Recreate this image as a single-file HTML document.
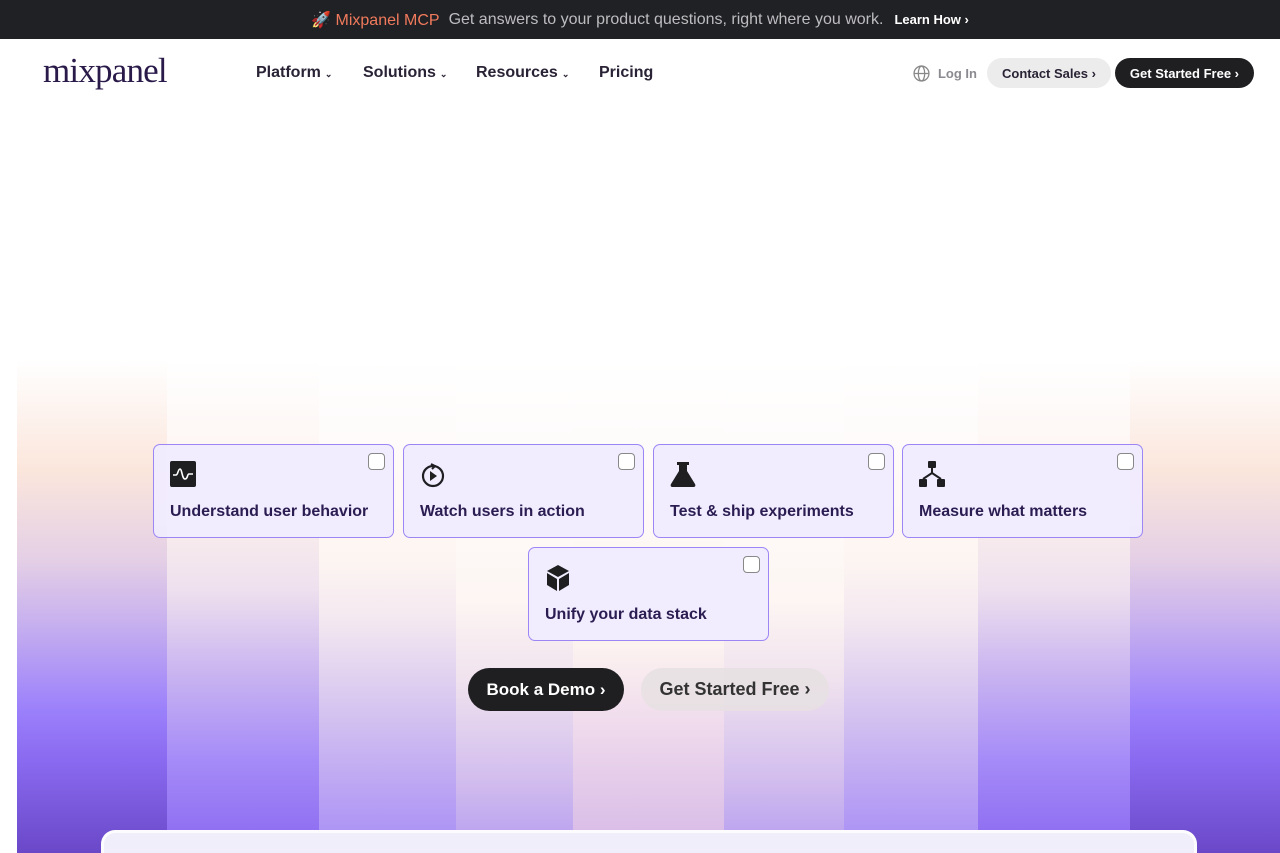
<!DOCTYPE html>
<html><head><meta charset="utf-8"><style>
*{box-sizing:border-box;margin:0;padding:0}
html,body{width:1280px;height:853px;overflow:hidden}
body{background:#fff;font-family:"Liberation Sans",sans-serif;position:relative}
.top{height:39px;background:#202124;color:#bdbdc0;font-size:16px;display:flex;align-items:center;justify-content:center;gap:9px}
.top .r{color:#f07a5c}
.top b{color:#fff;font-size:13px;margin-left:2px}
.nav{position:absolute;top:39px;left:0;right:0;height:68px}
.logo{position:absolute;left:43px;top:12px;font-family:"Liberation Serif",serif;font-size:35px;color:#2a1a4a;letter-spacing:-0.8px}
.links{position:absolute;left:256px;top:25px;font-size:16px;font-weight:bold;color:#2a2335}
.links span{position:absolute;white-space:nowrap}
.links span small{font-size:9px;margin-left:4px}
.right{position:absolute;right:26px;top:19px;display:flex;align-items:center;gap:4px;font-size:13px;font-weight:bold}
.login{color:#8a8a90;display:flex;align-items:center;gap:8px;margin-right:6px}
.pill{height:30px;border-radius:15px;padding:0 15px;display:flex;align-items:center;white-space:nowrap}
.cs{background:#ececec;color:#2a2335}
.gs{background:#1f1f22;color:#fff}
.bg{position:absolute;top:360px;height:493px}
.card{position:absolute;width:241px;height:94px;border:1px solid #9c86f6;border-radius:7px;background:rgba(240,236,255,.93)}
.card .cb{position:absolute;right:8px;top:8px;width:17px;height:17px;border:1.5px solid #888;border-radius:4px;background:#fff}
.card svg{position:absolute;left:16px;top:16px}
.card .t{position:absolute;left:16px;top:58px;font-size:16px;font-weight:bold;color:#2b1d52;white-space:nowrap}
.btn{position:absolute;top:668px;height:43px;border-radius:22px;font-size:18px;font-weight:bold;display:flex;align-items:center;justify-content:center;white-space:nowrap}
.panel{position:absolute;left:101px;top:830px;width:1096px;height:40px;border:3px solid rgba(255,255,255,.8);border-radius:14px;background:#f1eefb}
</style></head><body>
<div class="top"><span class="r">🚀 Mixpanel MCP</span><span>Get answers to your product questions, right where you work.</span><b>Learn How ›</b></div>
<div class="nav">
<div class="logo">mixpanel</div>
<div class="links"><span style="left:0">Platform<small>⌄</small></span><span style="left:107px">Solutions<small>⌄</small></span><span style="left:220px">Resources<small>⌄</small></span><span style="left:343px">Pricing</span></div>
<div class="right"><span class="login"><svg width="17" height="17" viewBox="0 0 16 16" fill="none" stroke="#888" stroke-width="1.2"><circle cx="8" cy="8" r="7"/><ellipse cx="8" cy="8" rx="3" ry="7"/><path d="M1 8h14"/></svg>Log In</span><span class="pill cs">Contact Sales ›</span><span class="pill gs">Get Started Free ›</span></div>
</div>
<div class="bg" style="left:17px;width:150px;background:linear-gradient(#fff 0,#fbe6dc 110px,#e4cfe6 200px,#c9b2ee 260px,#9b80fb 350px,#8a6af0 400px,#6a48c8 493px)"></div>
<div class="bg" style="left:1130px;width:150px;background:linear-gradient(#fff 0,#fbe6dc 110px,#e4cfe6 200px,#c9b2ee 260px,#9b80fb 350px,#8a6af0 400px,#6a48c8 493px)"></div>
<div class="bg" style="left:167px;width:152px;background:linear-gradient(#fff 0,#fcf0ec 150px,#eee0ee 230px,#cbb6f0 310px,#a58bf8 400px,#8a68f0 493px)"></div>
<div class="bg" style="left:978px;width:152px;background:linear-gradient(#fff 0,#fcf0ec 150px,#eee0ee 230px,#cbb6f0 310px,#a58bf8 400px,#8a68f0 493px)"></div>
<div class="bg" style="left:319px;width:137px;background:linear-gradient(#fff 0,#fdf5f2 200px,#f3e8f0 260px,#d2c0f0 360px,#a68cf6 493px)"></div>
<div class="bg" style="left:844px;width:134px;background:linear-gradient(#fff 0,#fdf5f2 200px,#f3e8f0 260px,#d2c0f0 360px,#a68cf6 493px)"></div>
<div class="bg" style="left:456px;width:117px;background:linear-gradient(#fff 0,#fdf6f3 240px,#f0e2ee 320px,#d2bdee 420px,#b59cf0 493px)"></div>
<div class="bg" style="left:724px;width:120px;background:linear-gradient(#fff 0,#fdf6f3 240px,#f0e2ee 320px,#d2bdee 420px,#b59cf0 493px)"></div>
<div class="bg" style="left:573px;width:151px;background:linear-gradient(#fff 0,#fdf4f0 280px,#f0dced 360px,#d6b8e6 493px)"></div>

<div class="card" style="left:153px;top:444px"><div class="cb"></div><svg width="26" height="26" viewBox="0 0 26 26"><rect width="26" height="26" rx="2" fill="#1f1f22"/><path d="M3 14h3c2 0 2-6 4-6s2 10 5 10 2-5 4-5h4" stroke="#fff" stroke-width="1.6" fill="none"/></svg><div class="t">Understand user behavior</div></div>
<div class="card" style="left:403px;top:444px"><div class="cb"></div><svg width="26" height="28" viewBox="0 0 26 28"><circle cx="13" cy="15" r="10" stroke="#1f1f22" stroke-width="2.2" fill="none"/><path d="M10 10l7 5-7 5z" fill="#1f1f22"/><path d="M11 3l4 2-3 3" stroke="#1f1f22" stroke-width="2" fill="none"/></svg><div class="t">Watch users in action</div></div>
<div class="card" style="left:653px;top:444px"><div class="cb"></div><svg width="26" height="26" viewBox="0 0 26 26"><path d="M7 1h12v3h-2v6l8 13c1 2 0 3-2 3H3c-2 0-3-1-2-3l8-13V4H7z" fill="#1f1f22"/></svg><div class="t">Test &amp; ship experiments</div></div>
<div class="card" style="left:902px;top:444px"><div class="cb"></div><svg width="26" height="26" viewBox="0 0 26 26"><rect x="9" y="0" width="8" height="7" rx="1" fill="#1f1f22"/><rect x="0" y="18" width="8" height="8" rx="1" fill="#1f1f22"/><rect x="18" y="18" width="8" height="8" rx="1" fill="#1f1f22"/><path d="M13 7v5M4 18l9-6 9 6" stroke="#1f1f22" stroke-width="2" fill="none"/></svg><div class="t">Measure what matters</div></div>
<div class="card" style="left:528px;top:547px"><div class="cb"></div><svg width="26" height="28" viewBox="0 0 26 28"><path d="M13 1l11 6-11 6L2 7z M2 9l10 6v12L2 21z M24 9l-10 6v12l10-6z" fill="#1f1f22"/></svg><div class="t">Unify your data stack</div></div>

<div class="btn" style="left:468px;width:156px;background:#1f1f22;color:#fff;font-size:17px">Book a Demo&nbsp;›</div>
<div class="btn" style="left:641px;width:188px;background:rgba(230,224,226,.85);color:#333">Get Started Free&nbsp;›</div>
<div class="panel"></div>
</body></html>
